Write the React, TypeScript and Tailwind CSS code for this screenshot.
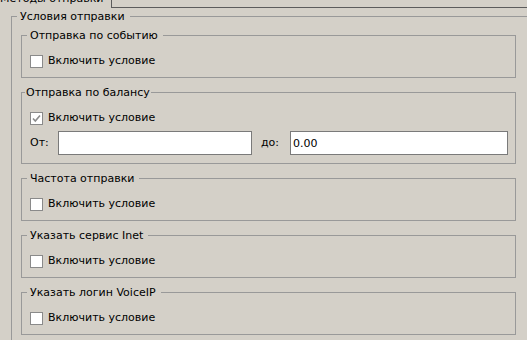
import React from "react";

function CheckBox({ checked, label }: { checked?: boolean; label: string }) {
  return (
    <div className="flex items-center h-[13px]">
      <span className="w-[13px] h-[13px] border border-[#8a8a8a] bg-white flex items-center justify-center">
        {checked && (
          <svg width="11" height="11" viewBox="0 0 11 11">
            <path d="M2 5.5 L4.3 8 L9 2.5" stroke="#8c8c8c" strokeWidth="1.6" fill="none" />
          </svg>
        )}
      </span>
      <span className="ml-[5px]">{label}</span>
    </div>
  );
}

function Group({
  title,
  first,
  children,
}: {
  title: string;
  first?: boolean;
  children: React.ReactNode;
}) {
  return (
    <fieldset
      className={
        first
          ? "ml-[9px] mt-[6px] w-[495px] border border-[#999999] pt-[13px] pb-[9px]"
          : "ml-[9px] mt-[8px] w-[495px] border border-[#999999] pt-[13px] pb-[9px]"
      }
    >
      <legend className="ml-[5px] pl-[3px] pr-[5px] leading-[13px]">{title}</legend>
      <div className="pl-[8px] pr-[7px]">{children}</div>
    </fieldset>
  );
}

export default function App() {
  return (
    <div
      className="w-[527px] h-[340px] overflow-hidden bg-[#d4d0c8] text-[11px] text-black"
      style={{ fontFamily: '"DejaVu Sans", sans-serif' }}
    >
      <div className="flex h-[10px]">
        <div className="w-[112px] h-[8px] border-r border-[#5c5c5c] overflow-hidden">
          <div className="mt-[-8px] leading-[13px] whitespace-nowrap">Методы отправки</div>
        </div>
        <div className="flex-1 h-[8px] border-b border-[#5c5c5c]" />
      </div>

      <fieldset className="ml-[11px] w-[540px] border border-[#999999] pb-[20px]">
        <legend className="ml-[5px] pl-[3px] pr-[5px] leading-[13px]">Условия отправки</legend>

        <Group title="Отправка по событию" first>
          <CheckBox label="Включить условие" />
        </Group>

        <fieldset className="ml-[9px] mt-[8px] w-[495px] border border-[#999999] pt-[13px] pb-[8px]">
          <legend className="ml-[3px] px-[1px] leading-[13px]">Отправка по балансу</legend>
          <div className="pl-[8px] pr-[7px]">
            <CheckBox checked label="Включить условие" />
            <div className="flex items-center mt-[6px] h-[24px]">
              <span className="w-[28px]">От:</span>
              <input
                className="w-[194px] h-[24px] border border-[#7a7a7a] bg-white px-[2px] outline-none"
                style={{ fontFamily: '"DejaVu Sans", sans-serif', fontSize: 11 }}
              />
              <span className="w-[38px] pl-[9px]">до:</span>
              <input
                defaultValue="0.00"
                className="flex-1 min-w-0 h-[24px] border border-[#7a7a7a] bg-white px-[2px] outline-none"
                style={{ fontFamily: '"DejaVu Sans", sans-serif', fontSize: 11 }}
              />
            </div>
          </div>
        </fieldset>

        <Group title="Частота отправки">
          <CheckBox label="Включить условие" />
        </Group>
        <Group title="Указать сервис Inet">
          <CheckBox label="Включить условие" />
        </Group>
        <Group title="Указать логин VoiceIP">
          <CheckBox label="Включить условие" />
        </Group>
      </fieldset>
    </div>
  );
}
